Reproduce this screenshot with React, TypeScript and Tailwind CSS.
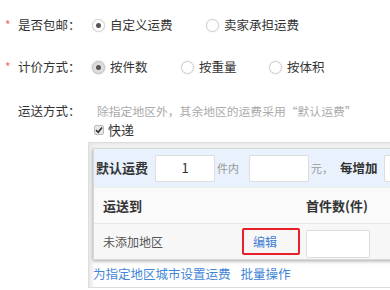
import React from "react";

function Radio({ checked, filled }: { checked?: boolean; filled?: boolean }) {
  return (
    <span
      className={
        "flex h-[13px] w-[13px] shrink-0 items-center justify-center rounded-full border " +
        (filled
          ? "border-[#c4c4c4] bg-[#dedede] shadow-[0_0_2px_rgba(0,0,0,0.25)]"
          : "border-[#d0d0d0] bg-white shadow-[0_0_2px_rgba(0,0,0,0.12)]")
      }
    >
      {checked ? <span className="h-[5px] w-[5px] rounded-full bg-[#555]" /> : null}
    </span>
  );
}

function Label({ star, text }: { star?: boolean; text: string }) {
  return (
    <div className="flex w-[92px] shrink-0 items-center">
      <span className="w-[18px] pl-[5px] text-[12px] leading-none text-[#f06a6a]">
        {star ? "*" : ""}
      </span>
      <span className="whitespace-nowrap text-[12.5px] text-[#333]">{text}</span>
    </div>
  );
}

export default function App() {
  return (
    <div
      className="relative h-[290px] w-[390px] overflow-hidden bg-white text-[#333]"
      style={{ fontFamily: '"Noto Sans CJK SC", "Noto Sans", sans-serif' }}
    >
      <div className="flex w-[520px] flex-col pt-[16px]">
        {/* row 1 */}
        <div className="flex h-[18px] items-center">
          <Label star text="是否包邮：" />
          <div className="flex items-center">
            <div className="flex w-[114px] items-center gap-[5px]">
              <Radio checked />
              <span className="whitespace-nowrap text-[12.5px]">自定义运费</span>
            </div>
            <div className="flex items-center gap-[5px]">
              <Radio />
              <span className="whitespace-nowrap text-[12.5px]">卖家承担运费</span>
            </div>
          </div>
        </div>

        {/* row 2 */}
        <div className="mt-[24px] flex h-[18px] items-center">
          <Label star text="计价方式：" />
          <div className="flex items-center">
            <div className="flex w-[89px] items-center gap-[5px]">
              <Radio checked filled />
              <span className="whitespace-nowrap text-[12.5px]">按件数</span>
            </div>
            <div className="flex w-[88px] items-center gap-[5px]">
              <Radio />
              <span className="whitespace-nowrap text-[12.5px]">按重量</span>
            </div>
            <div className="flex items-center gap-[5px]">
              <Radio />
              <span className="whitespace-nowrap text-[12.5px]">按体积</span>
            </div>
          </div>
        </div>

        {/* row 3 */}
        <div className="mt-[26px] flex h-[18px] items-center">
          <Label text="运送方式：" />
          <span className="ml-[5px] whitespace-nowrap text-[11.8px] text-[#aaa]">
            除指定地区外，其余地区的运费采用“默认运费”
          </span>
        </div>

        {/* checkbox */}
        <div className="ml-[94px] mt-[2px] flex h-[16px] items-center gap-[4px]">
          <span className="flex h-[10px] w-[10px] items-center justify-center rounded-[2px] border border-[#bbb] bg-[#e8e8e8]">
            <svg width="8" height="8" viewBox="0 0 8 8">
              <path d="M1 4.2 L3.2 6.3 L7 1.5" stroke="#333" strokeWidth="1.6" fill="none" />
            </svg>
          </span>
          <span className="text-[13px] text-[#333]">快递</span>
        </div>

        {/* box */}
        <div className="ml-[88px] mt-[4px] h-[146px] w-[420px] border border-[#ddd] bg-white pl-[4px] pt-[5px] shadow-[inset_3px_3px_4px_rgba(0,0,0,0.1)]">
          <div className="w-[400px] border border-[#d8d8d8] bg-[#f8f8f8] shadow-[0_2px_3px_rgba(0,0,0,0.22),-1px_0_2px_rgba(0,0,0,0.12)]">
            {/* blue row */}
            <div className="flex h-[38px] items-center whitespace-nowrap bg-[#e8f1fc] pl-[2px]">
              <span className="shrink-0 text-[13px] font-bold text-[#333]">默认运费</span>
              <div className="ml-[7px] flex h-[27px] w-[60px] shrink-0 items-center justify-center rounded-[2px] border border-[#ddd] bg-white text-[13px] text-[#333]">
                1
              </div>
              <span className="ml-[2px] shrink-0 text-[11px] text-[#999]">件内</span>
              <div className="ml-[10px] h-[27px] w-[60px] shrink-0 rounded-[2px] border border-[#ddd] bg-white" />
              <span className="ml-[2px] w-[16px] shrink-0 overflow-visible text-[11px] text-[#999]">元，</span>
              <span className="ml-[13px] shrink-0 text-[12.5px] font-bold text-[#333]">每增加</span>
              <div className="ml-[6px] h-[27px] w-[60px] shrink-0 rounded-[2px] border border-[#ddd] bg-white" />
            </div>
            {/* header row */}
            <div className="flex h-[36px] items-center whitespace-nowrap border-t border-[#eee] bg-[#fafafa] pl-[9px]">
              <span className="w-[203px] shrink-0 text-[13px] font-bold text-[#333]">运送到</span>
              <span className="shrink-0 text-[13px] font-bold text-[#333]">首件数(件)</span>
            </div>
            {/* data row */}
            <div className="flex h-[36px] items-center whitespace-nowrap border-t border-[#e6e6e6] bg-[#f7f7f7] pl-[9px]">
              <span className="w-[139px] shrink-0 text-[12px] text-[#555]">未添加地区</span>
              <div className="flex h-[27px] w-[58px] shrink-0 items-center rounded-[2px] border-2 border-[#e8202a] pl-[9px]">
                <span className="text-[12px] text-[#3f7fd4]">编辑</span>
              </div>
              <div className="ml-[6px] mt-[4px] h-[28px] w-[64px] shrink-0 rounded-[2px] border border-[#ddd] bg-white" />
            </div>
          </div>
          <div className="mt-[5px] flex items-center gap-[10px] whitespace-nowrap text-[12.5px] text-[#3f86d8]">
            <span>为指定地区城市设置运费</span>
            <span>批量操作</span>
          </div>
        </div>
      </div>
    </div>
  );
}
